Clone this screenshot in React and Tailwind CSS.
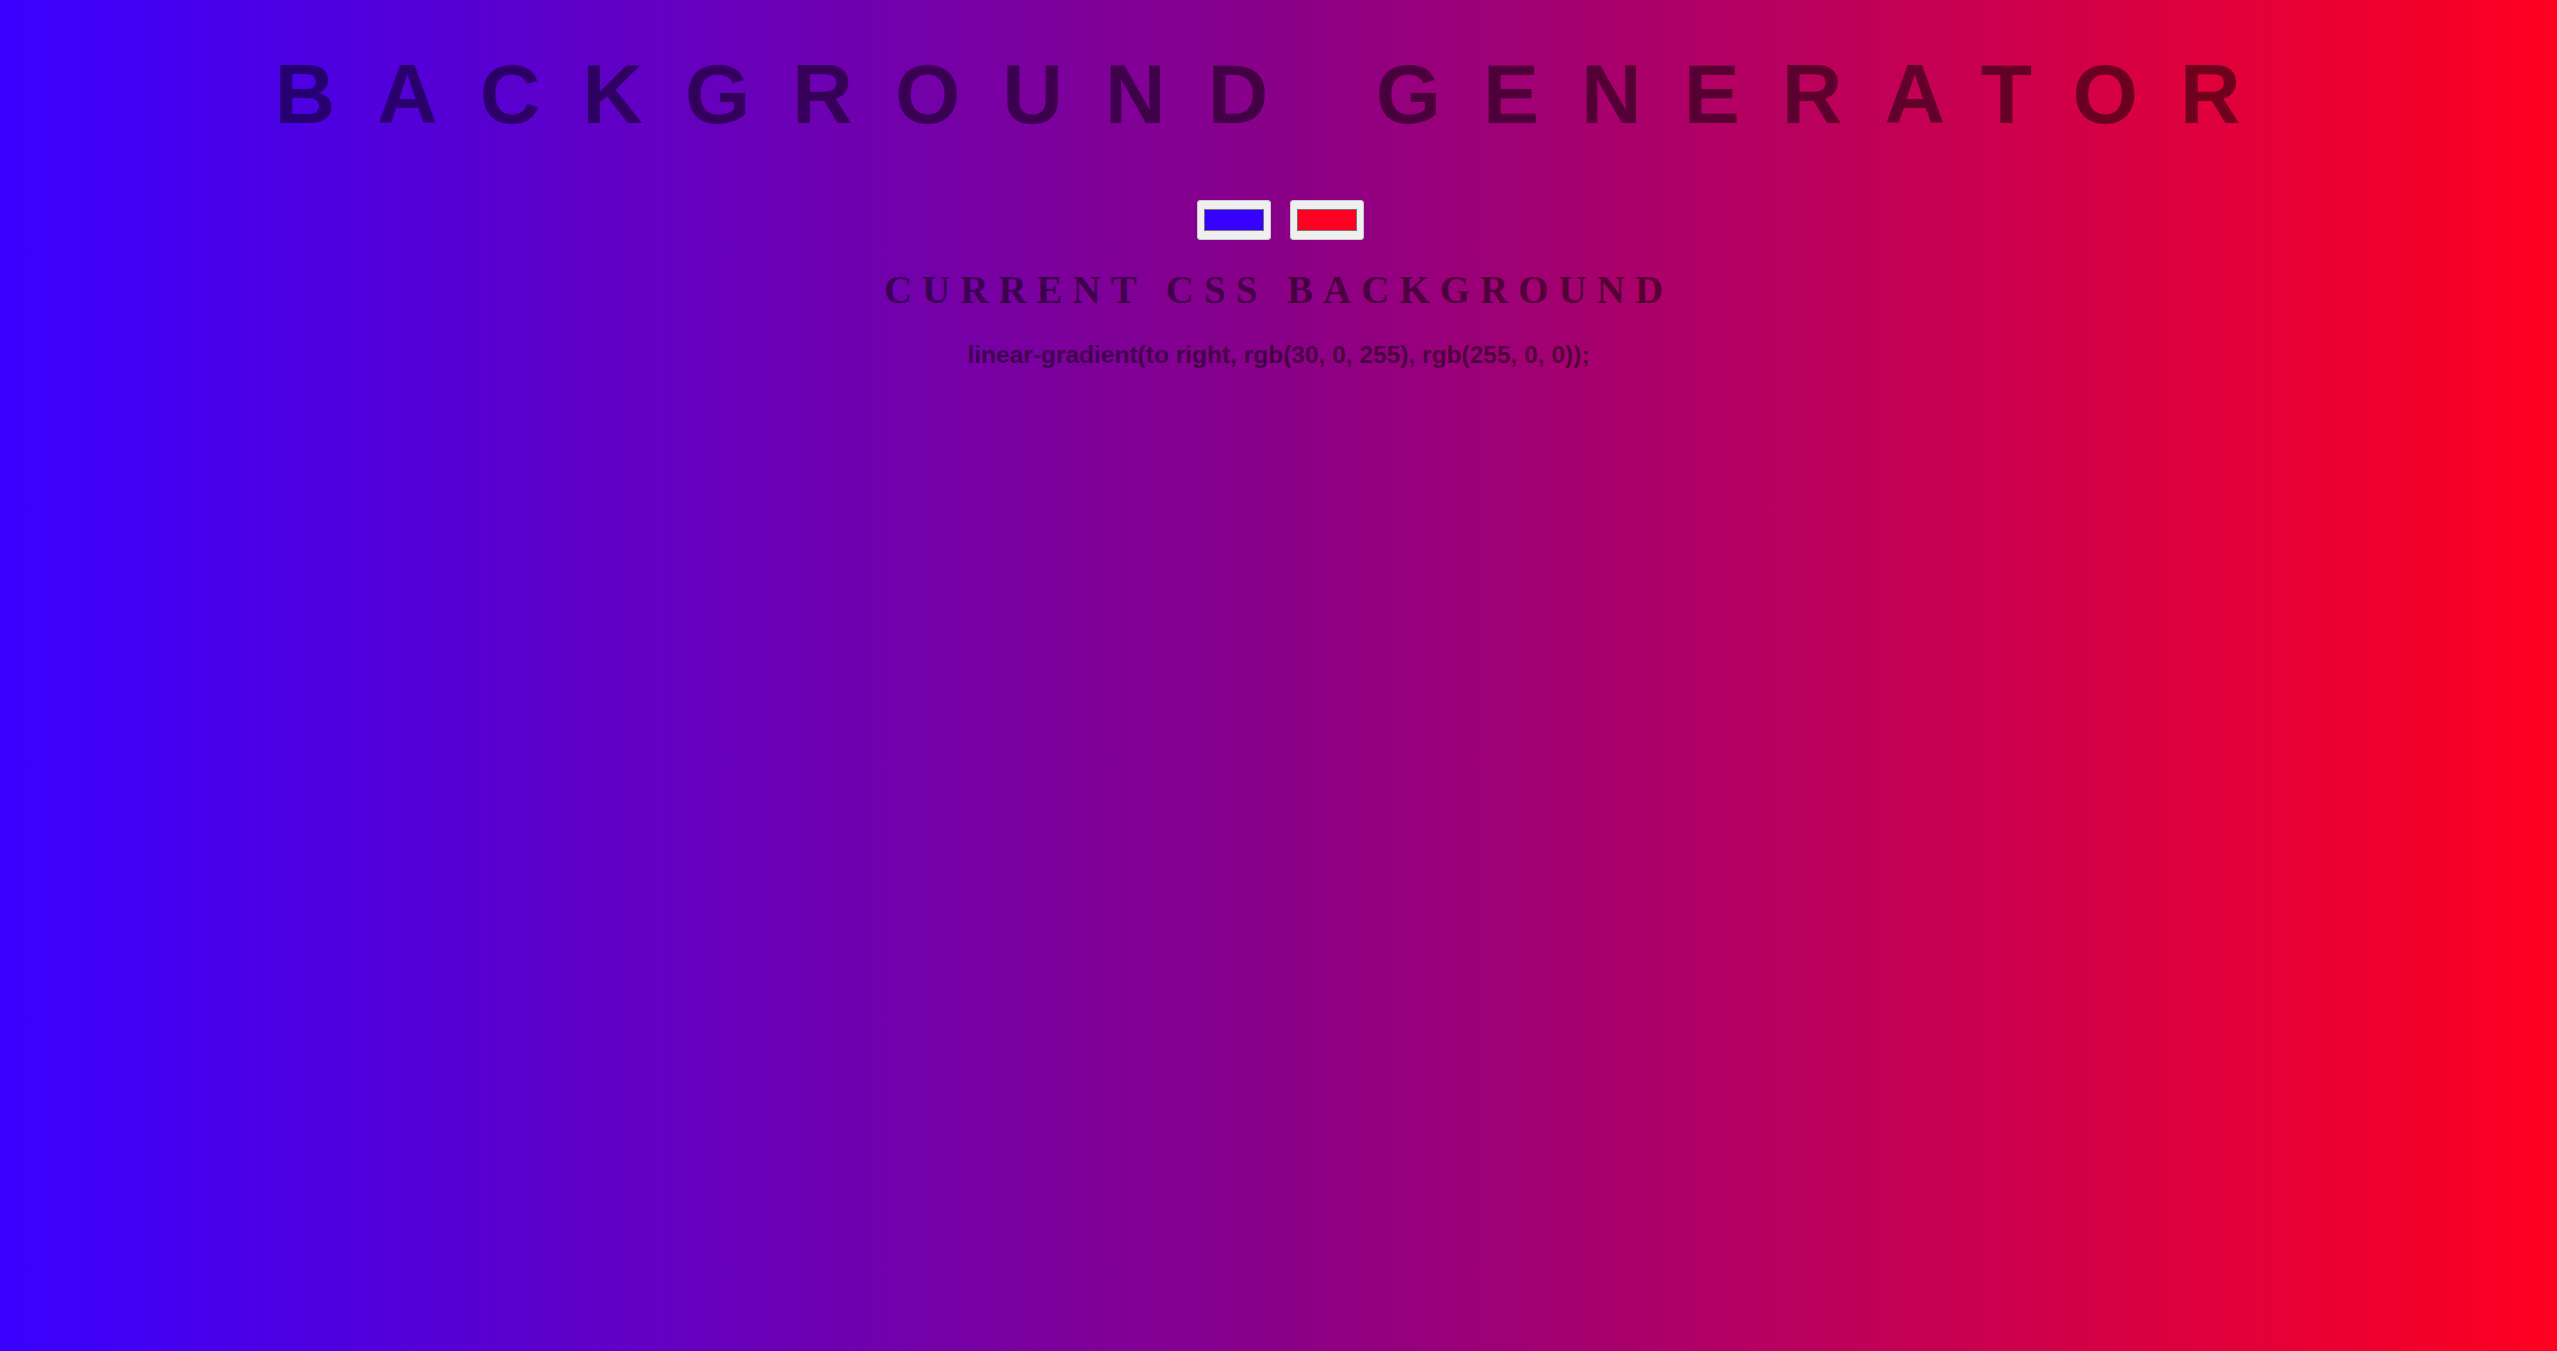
import React from 'react';

// Background generator page: title, two colour pickers and the current css string
const ColorSwatch = ({ swatchClass }) => (
  <div className="w-[74px] h-[40px] rounded-[3px] border border-[#c8c8c8] bg-[#efefef] flex items-center justify-center">
    <div className={`w-[60px] h-[22px] border border-[#767676] ${swatchClass}`} />
  </div>
);

const App = () => {
  return (
    <div className="min-h-screen w-full bg-[linear-gradient(to_right,#3a00ff,#8a0088_50%,#ff0020)] flex flex-col items-center text-black/50">
      <h1 className="mt-[52px] text-[84px] leading-[84px] font-bold tracking-[42px] whitespace-nowrap font-['Liberation_Sans',Arial,sans-serif]">
        BACKGROUND GENERATOR
      </h1>

      <div className="mt-[64px] ml-[3px] flex items-center gap-[19px]">
        <ColorSwatch swatchClass="bg-[#3700ff]" />
        <ColorSwatch swatchClass="bg-[#ff0022]" />
      </div>

      <h3 className="mt-[30px] text-[39px] leading-[39px] font-bold tracking-[10px] whitespace-nowrap font-['Liberation_Serif','Times_New_Roman',serif]">
        CURRENT CSS BACKGROUND
      </h3>

      <p className="mt-[33px] text-[24.5px] leading-[25px] font-bold whitespace-nowrap font-['Liberation_Sans',Arial,sans-serif]">
        linear-gradient(to right, rgb(30, 0, 255), rgb(255, 0, 0));
      </p>
    </div>
  );
};

export default App;
